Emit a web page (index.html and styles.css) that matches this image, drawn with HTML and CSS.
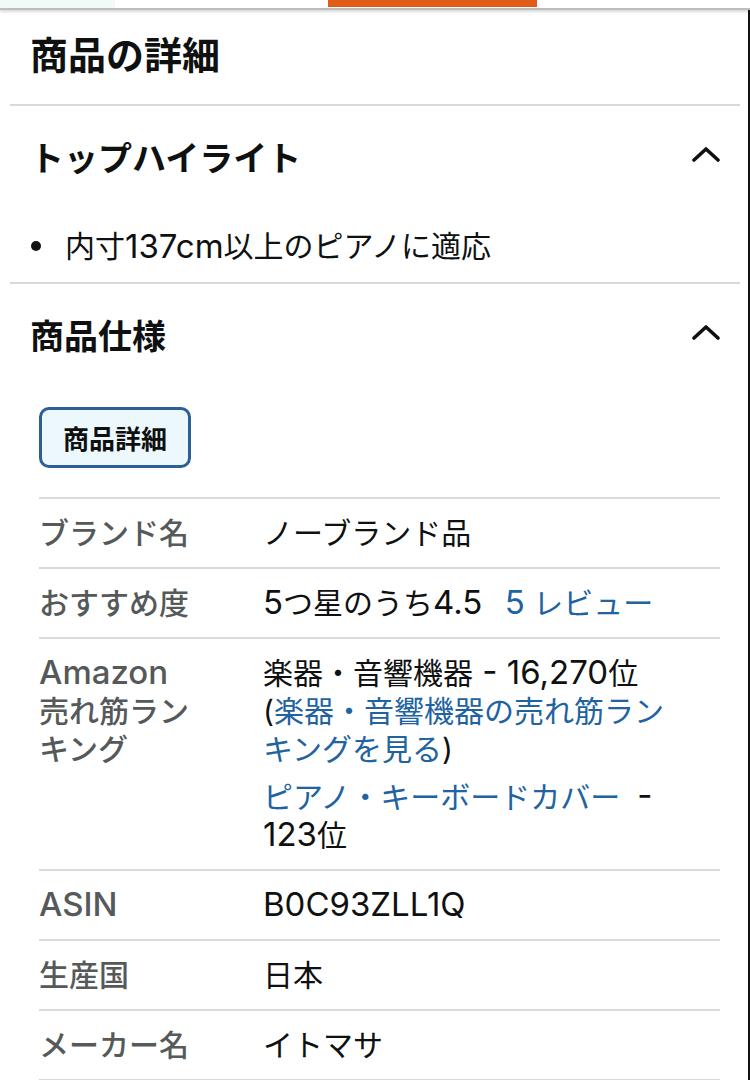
FILE: index.html
```html
<!DOCTYPE html>
<html>
<head>
    <meta charset="utf-8">
    <meta name="viewport" content="width=device-width, initial-scale=1.0">
    <title>商品の詳細</title>
    <link rel="stylesheet" href="styles.css">
</head>
<body>
    <div class="topbar">
        <span class="tab-left"></span>
        <span class="tab-active"></span>
    </div>
    <main class="page">
        <h2 class="page-title">商品の詳細</h2>

        <section class="expander">
            <div class="expander-head">
                <h3>トップハイライト</h3>
                <svg class="chevron" width="28" height="16" viewBox="0 0 28 16"><polyline points="2,14 14,3 26,14" /></svg>
            </div>
            <ul class="highlights">
                <li>内寸<span class="lat">137cm</span>以上のピアノに適応</li>
            </ul>
        </section>

        <section class="expander">
            <div class="expander-head">
                <h3>商品仕様</h3>
                <svg class="chevron" width="28" height="16" viewBox="0 0 28 16"><polyline points="2,14 14,3 26,14" /></svg>
            </div>
            <div class="spec-body">
                <button type="button" class="pill">商品詳細</button>
                <table class="spec">
                    <colgroup>
                        <col class="col-label" />
                        <col />
                    </colgroup>
                    <tbody>
                        <tr>
                            <th>ブランド名</th>
                            <td>ノーブランド品</td>
                        </tr>
                        <tr>
                            <th>おすすめ度</th>
                            <td><span class="lat">5</span>つ星のうち<span class="lat">4.5</span> <a href="#" class="review-link"><span class="lat">5</span> レビュー</a></td>
                        </tr>
                        <tr>
                            <th><span class="lat">Amazon</span><br>売れ筋ランキング</th>
                            <td>
                                <ul class="rank-list">
                                    <li>楽器・音響機器<span class="lat"> - 16,270</span>位<br>(<a href="#">楽器・音響機器の売れ筋ランキングを見る</a>)</li>
                                    <li><a href="#">ピアノ・キーボードカバー</a>&nbsp;&nbsp;<span class="lat">- 123</span>位</li>
                                </ul>
                            </td>
                        </tr>
                        <tr>
                            <th><span class="lat">ASIN</span></th>
                            <td><span class="lat">B0C93ZLL1Q</span></td>
                        </tr>
                        <tr>
                            <th>生産国</th>
                            <td>日本</td>
                        </tr>
                        <tr>
                            <th>メーカー名</th>
                            <td>イトマサ</td>
                        </tr>
                    </tbody>
                </table>
            </div>
        </section>
    </main>
</body>
</html>
```

FILE: styles.css
```css
body {
    margin: 0;
    background: #fff;
    color: #0f1111;
    font-family: Inter, "Noto Sans CJK JP", sans-serif;
}

/* top tab strip */
.topbar {
    display: flex;
    height: 8px;
    border-bottom: 2px solid #bdbdbd;
    box-shadow: 0 2px 3px rgba(0, 0, 0, 0.15);
}
.tab-left {
    width: 115px;
    background: #f1faf6;
}
.tab-active {
    margin-left: 213px;
    width: 209px;
    height: 7px;
    background: #e35c17;
}

.page {
    padding: 0 8px 0 10px;
    border-right: 2px solid #111;
}
.page-title {
    margin: 0;
    padding: 19px 20px 27px;
    font-family: "Noto Sans CJK JP", sans-serif;
    font-size: 38px;
    line-height: 48px;
    font-weight: 700;
}

.expander {
    border-top: 2px solid #d9d9d9;
}
.expander-head {
    display: flex;
    align-items: center;
    justify-content: space-between;
    padding: 29px 20px;
}
.expander-head h3 {
    margin: 0;
    font-family: "Noto Sans CJK JP", sans-serif;
    font-size: 34px;
    line-height: 44px;
    font-weight: 700;
}
.chevron {
    margin-top: -6px;
}
.chevron polyline {
    fill: none;
    stroke: #0f1111;
    stroke-width: 3.6;
    stroke-linecap: round;
    stroke-linejoin: round;
}

/* latin runs come out a little wider than the kana */
.lat {
    font-size: 1.1em;
    line-height: 1;
}

.highlights {
    margin: 0;
    padding: 18px 20px 16px 21px;
    list-style: none;
    font-size: 30px;
    line-height: 40px;
}
.highlights li {
    display: flex;
    align-items: center;
}
.highlights li::before {
    content: "";
    width: 10px;
    height: 10px;
    margin-right: 24px;
    border-radius: 50%;
    background: #0f1111;
}

.spec-body {
    padding: 21px 20px 0 29px;
}
.pill {
    height: 61px;
    padding: 0 21px;
    border: 3px solid #2b5f95;
    border-radius: 10px;
    background: #edf8fd;
    color: #0f1111;
    font-family: "Noto Sans CJK JP", sans-serif;
    font-size: 26px;
    font-weight: 700;
}

table.spec {
    width: 100%;
    margin-top: 29px;
    border-collapse: collapse;
    table-layout: fixed;
    font-size: 30px;
    line-height: 38px;
}
.col-label {
    width: 224px;
}
.spec tr {
    border-top: 2px solid #d9d9d9;
    border-bottom: 2px solid #d9d9d9;
}
.spec th {
    padding: 15px 56px 15px 0;
    text-align: left;
    vertical-align: top;
    color: #565959;
    font-weight: 500;
}
.spec td {
    padding: 15px 36px 15px 0;
    vertical-align: top;
}
.spec a {
    color: #2162a1;
    text-decoration: none;
}
.review-link {
    margin-left: 14px;
}
.rank-list {
    margin: 0;
    padding: 0;
    list-style: none;
}
.rank-list li + li {
    margin-top: 10px;
}
```
